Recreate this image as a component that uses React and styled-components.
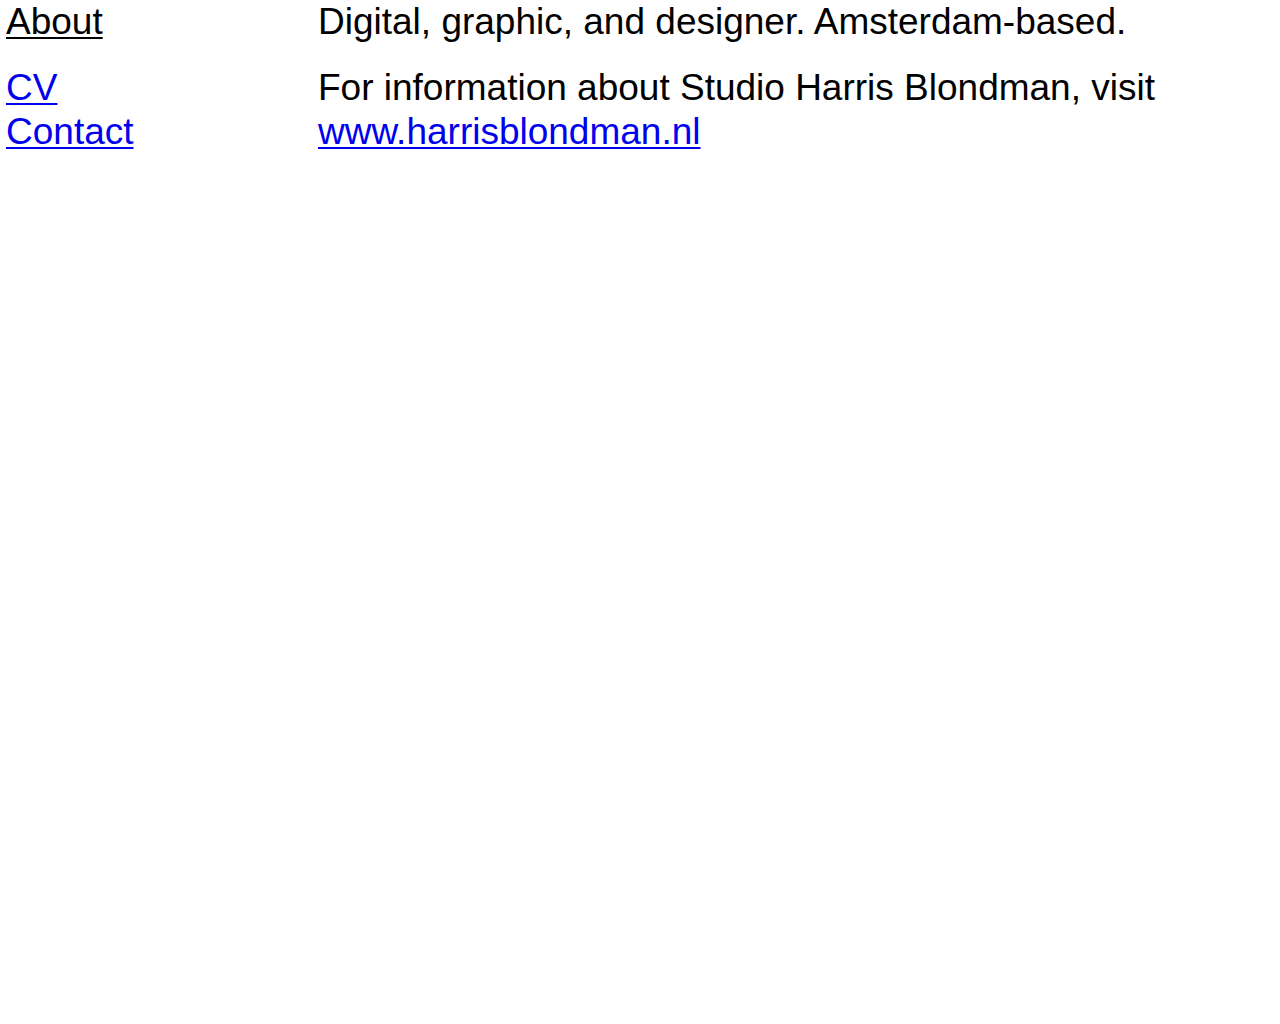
import React from 'react';
import styled, { createGlobalStyle } from 'styled-components';

const GlobalStyle = createGlobalStyle`
  html, body {
    margin: 0;
    padding: 0;
    background: #fff;
  }
  body {
    font-family: "Liberation Sans", Arial, Helvetica, sans-serif;
    font-size: 37px;
    line-height: 44px;
    color: #000;
  }
`;

const Page = styled.main`
  display: flex;
  flex-direction: column;
  gap: 22px;
  padding: 0 6px;
`;

const Row = styled.section`
  display: grid;
  grid-template-columns: 312px 1fr;
`;

const Nav = styled.nav`
  display: flex;
  flex-direction: column;
`;

const NavLink = styled.a`
  color: ${(props) => (props.$active ? '#000' : '#0000ee')};
  text-decoration: underline;
  text-decoration-thickness: 2px;
  text-underline-offset: 3px;
  align-self: flex-start;
`;

const Text = styled.p`
  margin: 0;
`;

const Link = styled.a`
  color: #0000ee;
  text-decoration: underline;
  text-decoration-thickness: 2px;
  text-underline-offset: 3px;
`;

const App = () => {
  return (
    <>
      <GlobalStyle />
      <Page>
        <Row>
          <Nav>
            <NavLink href="#about" $active>
              About
            </NavLink>
          </Nav>
          <Text>Digital, graphic, and designer. Amsterdam-based.</Text>
        </Row>
        <Row>
          <Nav>
            <NavLink href="#cv">CV</NavLink>
            <NavLink href="#contact">Contact</NavLink>
          </Nav>
          <Text>
            For information about Studio Harris Blondman, visit
            <br />
            <Link href="#">www.harrisblondman.nl</Link>
          </Text>
        </Row>
      </Page>
    </>
  );
};

export default App;
